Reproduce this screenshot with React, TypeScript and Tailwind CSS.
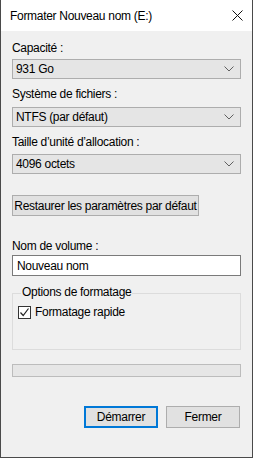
const font = { fontFamily: '"Liberation Sans", Arial, sans-serif' }

function Chevron() {
  return (
    <svg width="10" height="6" viewBox="0 0 10 6" className="shrink-0">
      <path d="M0.5 0.5 L5 5 L9.5 0.5" fill="none" stroke="#606060" strokeWidth="1" />
    </svg>
  )
}

function Combo({ value }: { value: string }) {
  return (
    <div className="h-[20px] bg-[#e5e5e5] border border-[#adadad] flex items-center justify-between pl-[3px] pr-[6px] text-[12px] leading-none text-black">
      <span>{value}</span>
      <Chevron />
    </div>
  )
}

function Label({ text }: { text: string }) {
  return <div className="text-[12px] leading-[15px] text-black">{text}</div>
}

export default function App() {
  return (
    <div
      className="w-[253px] h-[458px] bg-[#f0f0f0] border-l border-r border-b border-[#4a4a4a] flex flex-col overflow-hidden tracking-[-0.3px]"
      style={font}
    >
      {/* barre de titre */}
      <div className="h-[31px] bg-white flex items-center justify-between pl-[9px] pr-[9px] shrink-0">
        <span className="text-[12px] text-black">Formater Nouveau nom (E:)</span>
        <svg width="11" height="11" viewBox="0 0 11 11">
          <path d="M0.5 0.5 L10.5 10.5 M10.5 0.5 L0.5 10.5" stroke="#111" strokeWidth="1" />
        </svg>
      </div>

      <div className="flex flex-col px-[11px]">
        <div className="mt-[10px]"><Label text="Capacité :" /></div>
        <div className="mt-[3px]"><Combo value="931 Go" /></div>

        <div className="mt-[8px]"><Label text="Système de fichiers :" /></div>
        <div className="mt-[5px]"><Combo value="NTFS (par défaut)" /></div>

        <div className="mt-[8px]"><Label text="Taille d’unité d’allocation :" /></div>
        <div className="mt-[4px]"><Combo value="4096 octets" /></div>

        <div className="mt-[21px] flex">
          <button className="h-[21px] w-[187px] bg-[#e1e1e1] border border-[#adadad] text-[12px] text-black leading-none whitespace-nowrap flex items-center justify-center">
            Restaurer les paramètres par défaut
          </button>
        </div>

        <div className="mt-[23px]"><Label text="Nom de volume :" /></div>
        <div className="mt-[1px] h-[21px] bg-white border border-[#7a7a7a] flex items-center pl-[4px] text-[12px] text-black">
          Nouveau nom
        </div>

        {/* groupe options */}
        <div className="mt-[17px] h-[57px] border border-[#dcdcdc] relative">
          <span className="absolute left-[8px] -top-[9px] bg-[#f0f0f0] px-[1px] text-[12px] leading-[15px] text-black">
            Options de formatage
          </span>
          <div className="mt-[11px] ml-[5px] flex items-center gap-[4px]">
            <div className="w-[13px] h-[13px] border border-[#333] bg-white flex items-center justify-center">
              <svg width="11" height="11" viewBox="0 0 11 11">
                <path d="M1.5 5.5 L4.2 8.5 L9.5 1.5" fill="none" stroke="#222" strokeWidth="1.2" />
              </svg>
            </div>
            <span className="text-[12px] leading-[15px] text-black">Formatage rapide</span>
          </div>
        </div>

        {/* barre de progression */}
        <div className="mt-[14px] h-[13px] bg-[#e6e6e6] border border-[#bcbcbc]" />

        <div className="mt-[29px] flex justify-end gap-[8px] pr-[1px]">
          <button className="w-[74px] h-[22px] bg-[#e1e1e1] border-2 border-[#0078d7] text-[12px] text-black leading-none">
            Démarrer
          </button>
          <button className="w-[74px] h-[22px] bg-[#e1e1e1] border border-[#adadad] text-[12px] text-black leading-none">
            Fermer
          </button>
        </div>
      </div>
    </div>
  )
}
